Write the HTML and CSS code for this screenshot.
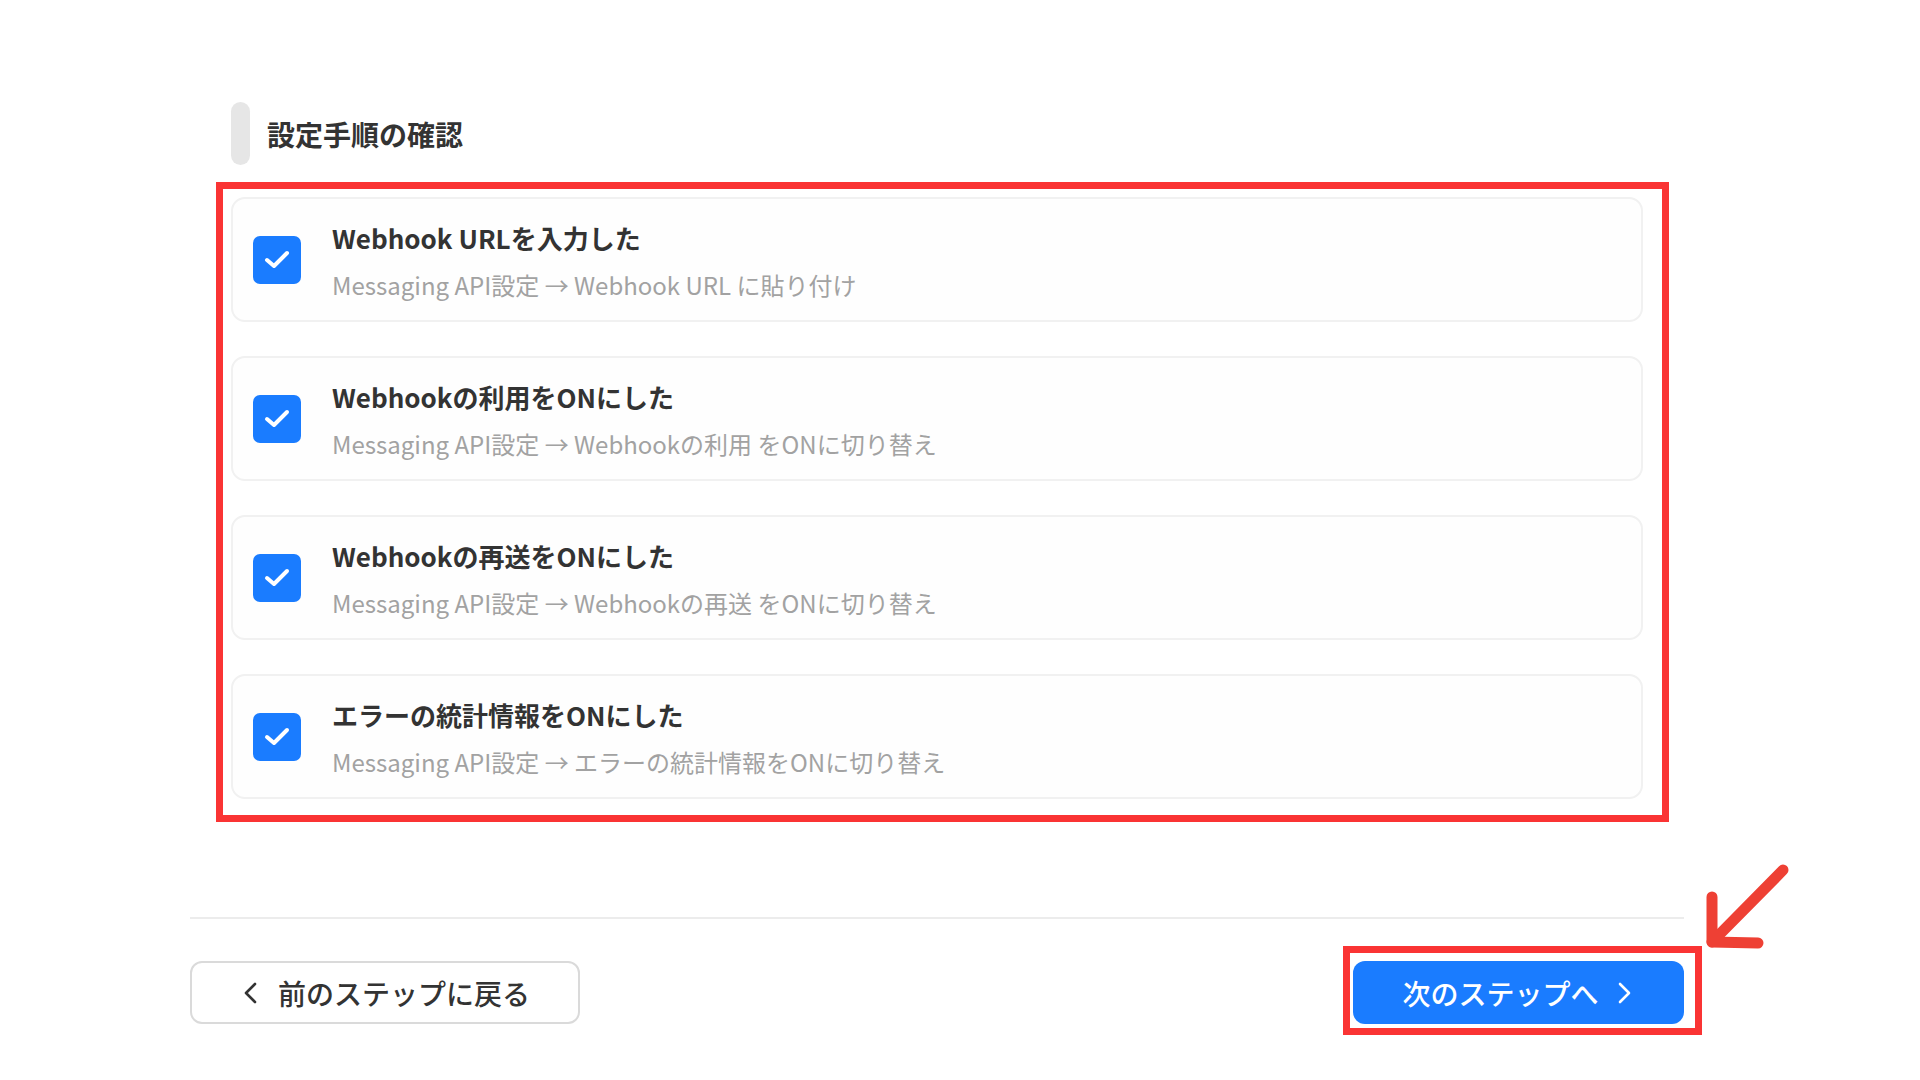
FILE: index.html
```html
<!DOCTYPE html>
<html lang="ja">
<head>
    <meta charset="UTF-8">
    <meta name="viewport" content="width=device-width, initial-scale=1.0">
    <title>設定手順の確認</title>
    <link rel="stylesheet" href="styles.css">
</head>
<body>

    <main class="wizard">
        <section class="confirm">
            <h2 class="section-title"><span class="section-bar"></span>設定手順の確認</h2>

            <div class="checklist">
                <div class="check-item">
                    <span class="check-box">
                        <svg viewBox="0 0 48 48" width="48" height="48"><polyline points="14,24 21,30 34,17" /></svg>
                    </span>
                    <div class="check-text">
                        <div class="check-title">Webhook URLを入力した</div>
                        <div class="check-desc">Messaging API設定 → Webhook URL に貼り付け</div>
                    </div>
                </div>

                <div class="check-item">
                    <span class="check-box">
                        <svg viewBox="0 0 48 48" width="48" height="48"><polyline points="14,24 21,30 34,17" /></svg>
                    </span>
                    <div class="check-text">
                        <div class="check-title">Webhookの利用をONにした</div>
                        <div class="check-desc">Messaging API設定 → Webhookの利用 をONに切り替え</div>
                    </div>
                </div>

                <div class="check-item">
                    <span class="check-box">
                        <svg viewBox="0 0 48 48" width="48" height="48"><polyline points="14,24 21,30 34,17" /></svg>
                    </span>
                    <div class="check-text">
                        <div class="check-title">Webhookの再送をONにした</div>
                        <div class="check-desc">Messaging API設定 → Webhookの再送 をONに切り替え</div>
                    </div>
                </div>

                <div class="check-item">
                    <span class="check-box">
                        <svg viewBox="0 0 48 48" width="48" height="48"><polyline points="14,24 21,30 34,17" /></svg>
                    </span>
                    <div class="check-text">
                        <div class="check-title">エラーの統計情報をONにした</div>
                        <div class="check-desc">Messaging API設定 → エラーの統計情報をONに切り替え</div>
                    </div>
                </div>

                <span class="mark-frame list-frame"></span>
            </div>
        </section>

        <footer class="wizard-nav">
            <button class="btn btn-back">
                <svg class="chevron" viewBox="0 0 20 28" width="20" height="28"><polyline points="15,5 6,14 15,23" /></svg>
                前のステップに戻る
            </button>

            <div class="next-wrap">
                <button class="btn btn-next">
                    次のステップへ
                    <svg class="chevron" viewBox="0 0 20 28" width="20" height="28"><polyline points="5,5 14,14 5,23" /></svg>
                </button>
                <span class="mark-frame next-frame"></span>
                <svg class="mark-arrow" viewBox="0 0 95 95" width="95" height="95">
                    <line x1="83" y1="10" x2="12" y2="82" />
                    <polyline points="12,37 12,82 58,83" />
                </svg>
            </div>
        </footer>
    </main>

</body>
</html>
```

FILE: styles.css
```css
:root {
    --text-main: #333333;
    --text-sub: #a2a2a2;
    --line: #ececec;
    --accent-blue: #1a7cff;
    --mark-red: #fa3434;
    --arrow-red: #ee4034;
}

body {
    margin: 0;
    background: #ffffff;
    color: var(--text-main);
    font-family: "Noto Sans CJK JP", "Noto Sans", sans-serif;
}

/* ページ全体 */
.wizard {
    width: 1494px;
    margin-left: 190px;
    padding: 102px 0 50px;
}

.confirm {
    padding: 0 41px;
}

/* 見出し */
.section-title {
    display: flex;
    align-items: center;
    gap: 17px;
    height: 63px;
    margin: 0;
    font-size: 28px;
    font-weight: 700;
    color: var(--text-main);
}

.section-bar {
    width: 19px;
    height: 63px;
    border-radius: 10px;
    background: #e6e6e6;
}

/* チェックリスト */
.checklist {
    position: relative;
    display: flex;
    flex-direction: column;
    gap: 34px;
    margin-top: 32px;
}

.check-item {
    display: flex;
    align-items: center;
    gap: 31px;
    height: 125px;
    padding: 0 20px;
    box-sizing: border-box;
    border: 2px solid #f1f1f1;
    border-radius: 14px;
    background: #fefefe;
}

.check-box {
    flex: none;
    width: 48px;
    height: 48px;
    border-radius: 7px;
    background: var(--accent-blue);
}

.check-box svg {
    display: block;
    fill: none;
    stroke: #ffffff;
    stroke-width: 4;
    stroke-linecap: round;
    stroke-linejoin: round;
}

.check-text {
    display: flex;
    flex-direction: column;
    gap: 13px;
    margin-top: 3px;
}

.check-title {
    font-size: 26px;
    font-weight: 700;
    line-height: 34px;
    color: var(--text-main);
}

.check-desc {
    font-size: 24px;
    line-height: 34px;
    color: var(--text-sub);
}

/* 注目枠 */
.mark-frame {
    position: absolute;
    border: 7px solid var(--mark-red);
    pointer-events: none;
}

.list-frame {
    top: -15px;
    left: -15px;
    right: -26px;
    bottom: -23px;
}

/* ナビゲーション */
.wizard-nav {
    display: flex;
    justify-content: space-between;
    align-items: center;
    margin-top: 118px;
    padding-top: 42px;
    border-top: 2px solid var(--line);
}

.btn {
    display: flex;
    align-items: center;
    justify-content: center;
    height: 63px;
    box-sizing: border-box;
    border-radius: 12px;
    font-family: inherit;
    font-size: 28px;
    font-weight: 500;
    cursor: pointer;
}

.btn .chevron {
    fill: none;
    stroke-width: 2.6;
    stroke-linecap: round;
    stroke-linejoin: round;
}

.btn-back {
    width: 390px;
    gap: 18px;
    border: 2px solid #dadada;
    background: #ffffff;
    color: var(--text-main);
}

.btn-back .chevron {
    stroke: var(--text-main);
}

.next-wrap {
    position: relative;
}

.btn-next {
    width: 331px;
    gap: 16px;
    border: none;
    background: var(--accent-blue);
    color: #ffffff;
}

.btn-next .chevron {
    stroke: #ffffff;
}

.next-frame {
    top: -15px;
    left: -10px;
    right: -18px;
    bottom: -11px;
}

.mark-arrow {
    position: absolute;
    left: 347px;
    top: -101px;
    fill: none;
    stroke: var(--arrow-red);
    stroke-width: 11;
    stroke-linecap: round;
    stroke-linejoin: round;
}
```
